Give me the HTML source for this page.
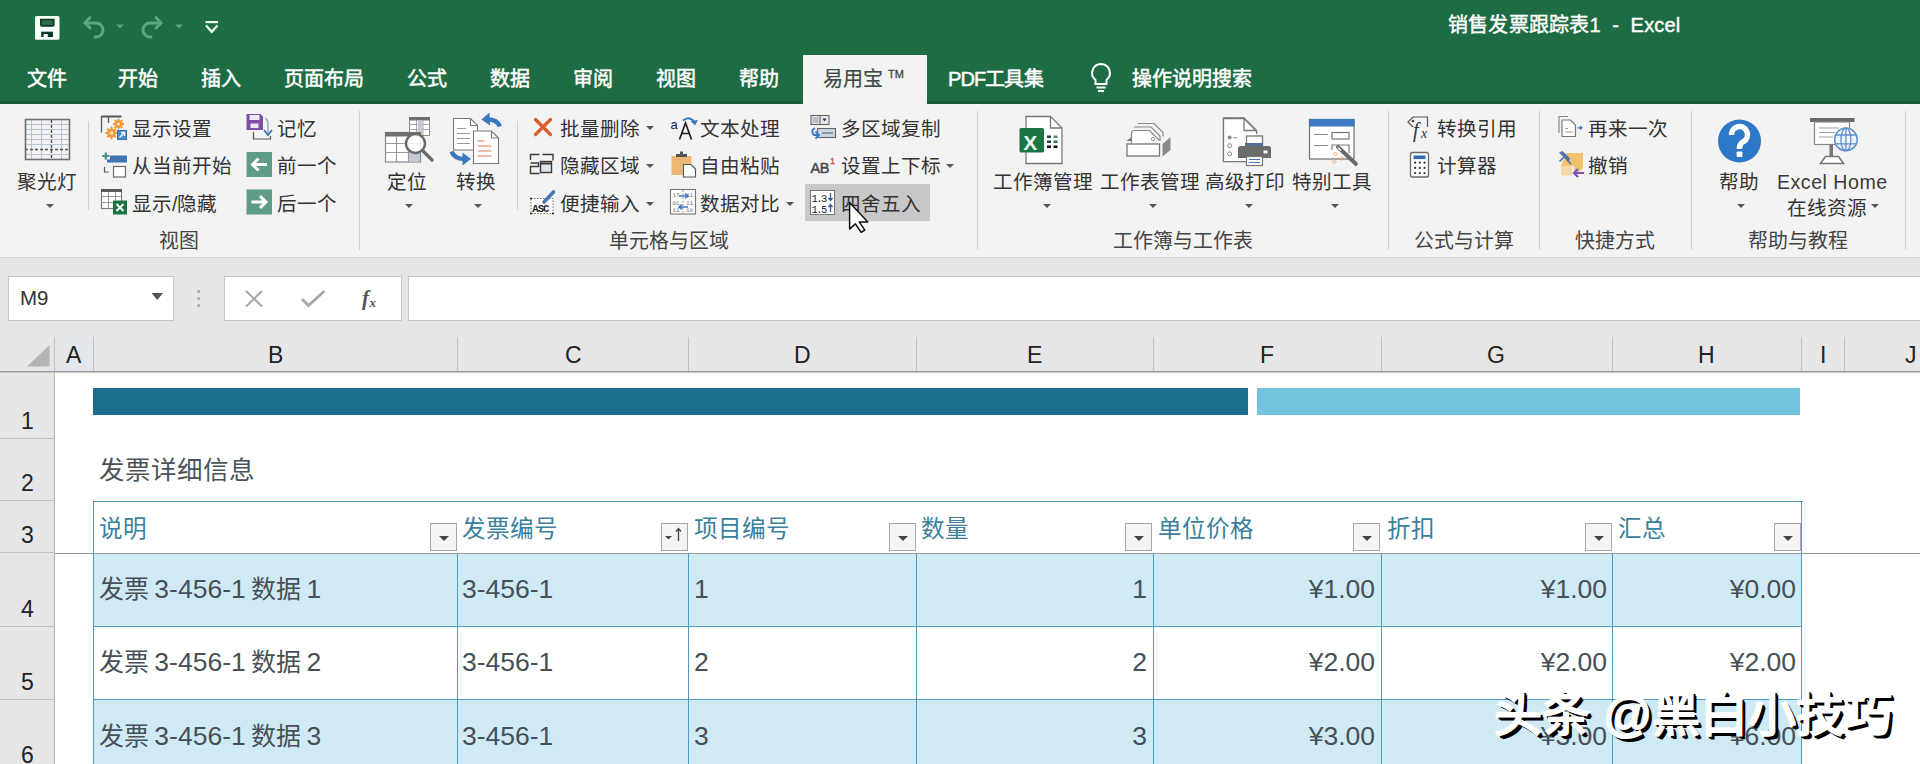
<!DOCTYPE html>
<html lang="zh-CN"><head><meta charset="utf-8">
<style>
*{margin:0;padding:0;box-sizing:border-box}
html,body{width:1920px;height:764px;overflow:hidden;background:#fff;font-family:"Liberation Sans",sans-serif}
.a{position:absolute;white-space:nowrap}
svg{position:absolute;overflow:visible}
.tab{position:absolute;top:66px;font-size:20px;color:#fff;line-height:26px;-webkit-text-stroke:0.5px currentColor}
.rt{position:absolute;font-size:19.6px;color:#333;line-height:24px;white-space:nowrap}
.gl{position:absolute;top:229px;font-size:19.9px;color:#444;line-height:24px;white-space:nowrap}
.sep{position:absolute;width:1px;background:#d0d0d0}
.dd{position:absolute;width:0;height:0;border-left:4px solid transparent;border-right:4px solid transparent;border-top:4px solid #555}
.colh{position:absolute;top:337px;height:35px;font-size:23px;color:#222;line-height:36px}
.colsep{position:absolute;top:337px;height:35px;width:1px;background:#c0c0c0}
.rowh{position:absolute;left:0;width:55px;font-size:23px;color:#222;text-align:center}
.rsep{position:absolute;left:0;width:55px;height:1px;background:#c0c0c0}
.th{position:absolute;top:514px;font-size:23.6px;color:#3b7f9c;line-height:30px}
.td{position:absolute;font-size:26.5px;color:#465056;line-height:30px}
.cj{font-size:25px}
.ws{word-spacing:-2px}
.fb{position:absolute;top:523px;width:27px;height:28px;background:#f4f4f4;border:1px solid #a8a8a8}
.fb:after{content:"";position:absolute;left:8px;top:12px;border-left:5px solid transparent;border-right:5px solid transparent;border-top:5px solid #444}
</style></head>
<body>
<div class="a" style="left:0;top:0;width:1920px;height:104px;background:#1e6c44"></div>
<div class="a" style="left:0;top:101px;width:1920px;height:3px;background:#185e39"></div>
<!-- QAT -->
<svg style="left:0;top:0" width="240" height="50">
 <rect x="35" y="16" width="24.5" height="23.8" rx="1.5" fill="#f4fff8"/>
 <path d="M40 18.7 h14.6 v6 a2 2 0 0 1 -2 2 h-10.6 a2 2 0 0 1 -2 -2z" fill="#0f3a22"/>
 <rect x="41.8" y="20.3" width="11" height="4.6" fill="#2a6e48"/>
 <rect x="41.2" y="31.7" width="11.8" height="5.3" fill="#0f3a22"/>
 <rect x="43.6" y="34" width="4.2" height="3" fill="#f4fff8"/>
 <g stroke="#5ea582" stroke-width="3" fill="none" stroke-linecap="round">
  <path d="M86 23 h10 a7 7 0 0 1 0 14 h-1"/>
  <path d="M90 17.5 l-5 5.5 l5 5"/>
  <path d="M160 23 h-10 a7 7 0 0 0 0 14 h1"/>
  <path d="M156 17.5 l5 5.5 l-5 5"/>
 </g>
 <path d="M116 24.5 h8 l-4 4z M175 24.5 h8 l-4 4z" fill="#5ea582"/>
 <rect x="205.5" y="21" width="12.5" height="2.2" fill="#e8fff0"/>
 <path d="M206 25.5 l5.75 6.3 l5.75 -6.3" stroke="#e8fff0" stroke-width="2.4" fill="none"/>
</svg>
<div class="a" style="left:1448px;top:12px;font-size:20px;color:#fff;line-height:26px;-webkit-text-stroke:0.4px #fff;letter-spacing:0.2px">销售发票跟踪表1&nbsp;&nbsp;-&nbsp;&nbsp;Excel</div>
<!-- tabs -->
<div class="tab" style="left:27px">文件</div>
<div class="tab" style="left:118px">开始</div>
<div class="tab" style="left:201px">插入</div>
<div class="tab" style="left:284px">页面布局</div>
<div class="tab" style="left:407px">公式</div>
<div class="tab" style="left:490px">数据</div>
<div class="tab" style="left:573px">审阅</div>
<div class="tab" style="left:656px">视图</div>
<div class="tab" style="left:739px">帮助</div>
<div class="a" style="left:803px;top:55px;width:124px;height:52px;background:#f3f3f3"></div>
<div class="tab" style="left:823px;color:#3d4a44;-webkit-text-stroke:0.2px #3d4a44">易用宝</div>
<div class="a" style="left:888px;top:68px;font-size:11px;color:#3d4a44;-webkit-text-stroke:0.3px #3d4a44">TM</div>
<div class="tab" style="left:948px;letter-spacing:-0.9px">PDF工具集</div>
<svg style="left:1088px;top:62px" width="26" height="32">
 <path d="M13 2 a9 9 0 0 1 5.5 16 v4 h-11 v-4 a9 9 0 0 1 5.5 -16z" stroke="#fff" stroke-width="2" fill="none"/>
 <path d="M8.5 25.5 h9 M10 29 h6" stroke="#fff" stroke-width="2"/>
</svg>
<div class="tab" style="left:1132px">操作说明搜索</div>

<div class="a" style="left:0;top:104px;width:1920px;height:154px;background:#f3f3f3"></div>
<div class="a" style="left:0;top:257px;width:1920px;height:1px;background:#d6d6d6"></div>
<!-- separators -->
<div class="sep" style="left:88px;top:121px;height:89px"></div>
<div class="sep" style="left:359px;top:111px;height:139px"></div>
<div class="sep" style="left:517px;top:121px;height:89px"></div>
<div class="sep" style="left:977px;top:111px;height:139px"></div>
<div class="sep" style="left:1388px;top:111px;height:139px"></div>
<div class="sep" style="left:1539px;top:111px;height:139px"></div>
<div class="sep" style="left:1691px;top:111px;height:139px"></div>
<div class="sep" style="left:1905px;top:111px;height:139px"></div>
<!-- group labels -->
<div class="gl" style="left:159px">视图</div>
<div class="gl" style="left:609px">单元格与区域</div>
<div class="gl" style="left:1113px">工作簿与工作表</div>
<div class="gl" style="left:1414px">公式与计算</div>
<div class="gl" style="left:1575px">快捷方式</div>
<div class="gl" style="left:1748px">帮助与教程</div>
<!-- big labels -->
<div class="rt" style="left:17px;top:170px">聚光灯</div>
<div class="dd" style="left:46px;top:204px"></div>
<div class="rt" style="left:387px;top:170px">定位</div>
<div class="dd" style="left:405px;top:204px"></div>
<div class="rt" style="left:456px;top:170px">转换</div>
<div class="dd" style="left:474px;top:204px"></div>
<div class="rt" style="left:993px;top:170px">工作簿管理</div>
<div class="dd" style="left:1043px;top:204px"></div>
<div class="rt" style="left:1100px;top:170px">工作表管理</div>
<div class="dd" style="left:1149px;top:204px"></div>
<div class="rt" style="left:1205px;top:170px">高级打印</div>
<div class="dd" style="left:1245px;top:204px"></div>
<div class="rt" style="left:1292px;top:170px">特别工具</div>
<div class="dd" style="left:1331px;top:204px"></div>
<div class="rt" style="left:1719px;top:170px">帮助</div>
<div class="dd" style="left:1737px;top:204px"></div>
<div class="rt" style="left:1777px;top:170px;letter-spacing:0.5px;color:#3a3a3a">Excel Home</div>
<div class="rt" style="left:1787px;top:196px">在线资源</div>
<div class="dd" style="left:1871px;top:204px"></div>
<!-- small labels -->
<div class="rt" style="left:132px;top:117px">显示设置</div>
<div class="rt" style="left:132px;top:154px">从当前开始</div>
<div class="rt" style="left:132px;top:192px">显示/隐藏</div>
<div class="rt" style="left:277px;top:117px">记忆</div>
<div class="rt" style="left:277px;top:154px">前一个</div>
<div class="rt" style="left:277px;top:192px">后一个</div>
<div class="rt" style="left:560px;top:117px">批量删除</div>
<div class="dd" style="left:646px;top:126px"></div>
<div class="rt" style="left:560px;top:154px">隐藏区域</div>
<div class="dd" style="left:646px;top:164px"></div>
<div class="rt" style="left:560px;top:192px">便捷输入</div>
<div class="dd" style="left:646px;top:202px"></div>
<div class="rt" style="left:700px;top:117px">文本处理</div>
<div class="rt" style="left:700px;top:154px">自由粘贴</div>
<div class="rt" style="left:700px;top:192px">数据对比</div>
<div class="dd" style="left:786px;top:202px"></div>
<div class="a" style="left:805px;top:184px;width:125px;height:37px;background:#c8c8c8"></div>
<div class="rt" style="left:841px;top:117px">多区域复制</div>
<div class="rt" style="left:841px;top:154px">设置上下标</div>
<div class="dd" style="left:946px;top:164px"></div>
<div class="rt" style="left:841px;top:192px">四舍五入</div>
<div class="rt" style="left:1437px;top:117px">转换引用</div>
<div class="rt" style="left:1437px;top:154px">计算器</div>
<div class="rt" style="left:1588px;top:117px">再来一次</div>
<div class="rt" style="left:1588px;top:154px">撤销</div>

<!-- spotlight grid -->
<svg style="left:0;top:0" width="300" height="260">
 <g stroke="#b7c3d3" stroke-width="1" fill="none">
  <path d="M31.5 120 v39 M41.5 120 v39 M61.5 120 v39"/>
  <path d="M25 124.5 h45 M25 129.5 h45 M25 134.5 h45 M25 139.5 h45 M25 144.5 h45 M25 154.5 h45"/>
 </g>
 <rect x="25.5" y="119.5" width="44" height="40" fill="none" stroke="#6e6e6e" stroke-width="1.6"/>
 <path d="M51.5 120 v39 M25 149.5 h45" stroke="#555" stroke-width="1.4" stroke-dasharray="3 2"/>
 <!-- 显示设置 -->
 <path d="M101.5 115.5 h20 v2 h-20z" fill="#595959"/>
 <path d="M101.5 116 v16.5 M108.5 117 v6" stroke="#595959" stroke-width="1.3" fill="none"/>
 <g fill="#f29a38">
  <circle cx="118.5" cy="124" r="4"/>
  <path d="M118.5 118.5 v11 M113 124 h11 M114.6 120.1 l7.8 7.8 M122.4 120.1 l-7.8 7.8" stroke="#f29a38" stroke-width="1.8"/>
  <circle cx="111.5" cy="133" r="4.6"/>
  <path d="M111.5 126.8 v12.4 M105.3 133 h12.4 M107.1 128.6 l8.8 8.8 M115.9 128.6 l-8.8 8.8" stroke="#f29a38" stroke-width="2"/>
 </g>
 <circle cx="118.5" cy="124" r="1.5" fill="#fbe3c6"/>
 <circle cx="111.5" cy="133" r="1.8" fill="#fbe3c6"/>
 <rect x="117.5" y="130.5" width="9" height="9" fill="#4b8bd0" stroke="#3b70b0" stroke-width="1"/>
 <path d="M119.5 137.5 l5 -5 M121 132.5 h3.5 v3.5" stroke="#fff" stroke-width="1.4" fill="none"/>
 <!-- 从当前开始 -->
 <path d="M105.8 152.5 v7 M102.3 156 h7" stroke="#4e8e80" stroke-width="2.2"/>
 <path d="M110 155.5 h17 v7 h-20 v-3 h3z" fill="#3d75b5"/>
 <path d="M104.5 167 v5 h4" stroke="#595959" stroke-width="1.2" fill="none"/>
 <rect x="113.5" y="166.5" width="12" height="10.5" fill="#fff" stroke="#6a6a6a" stroke-width="1.2"/>
 <!-- 显示/隐藏 -->
 <rect x="101.5" y="189.5" width="20" height="19" fill="#fff" stroke="#7a7a7a" stroke-width="1.1"/>
 <rect x="101" y="189" width="21" height="3" fill="#595959"/>
 <path d="M101.5 196.5 h20 M101.5 202.5 h12 M108.5 192 v16 M115.5 192 v8" stroke="#9a9a9a" stroke-width="1" fill="none"/>
 <rect x="113" y="200.5" width="14" height="14" fill="#1e7145"/>
 <path d="M116.5 204 l7 7 M123.5 204 l-7 7" stroke="#e8f5ea" stroke-width="2.2"/>
 <!-- 记忆 -->
 <path d="M246.5 114 h14 l2.5 2.5 v13.5 h-16.5z" fill="#7b4fa5"/>
 <rect x="249.5" y="115" width="10" height="5" fill="#f0e8f6"/>
 <rect x="250.5" y="123.5" width="8" height="4.5" fill="#f0e8f6"/>
 <path d="M253.5 132 v7 h17 v-3" stroke="#555" stroke-width="1.2" fill="none"/>
 <path d="M265.5 118 q3 3 2.5 7 v9" stroke="#8a9ab0" stroke-width="1.2" fill="none"/>
 <path d="M264 130 l4 5 l4 -5" stroke="#3c75b8" stroke-width="1.8" fill="none"/>
 <!-- 前一个 / 后一个 -->
 <rect x="246.5" y="152" width="25.5" height="25" fill="#5e9c88"/>
 <path d="M267 164.5 h-14 M258.5 158.5 l-6 6 l6 6" stroke="#fff" stroke-width="3" fill="none" stroke-linejoin="miter"/>
 <rect x="246.5" y="189.5" width="25.5" height="25" fill="#5e9c88"/>
 <path d="M251.5 202 h14 M260 196 l6 6 l-6 6" stroke="#fff" stroke-width="3" fill="none"/>
</svg>

<svg style="left:0;top:0" width="1000" height="260">
 <!-- 定位 -->
 <rect x="409.5" y="117.5" width="20" height="18" fill="#fff" stroke="#8a8a8a" stroke-width="1"/>
 <rect x="409" y="117" width="21" height="3.5" fill="#6f6f6f"/>
 <path d="M409.5 124.5 h20 M409.5 129.5 h20 M416.5 120 v15 M423 120 v15" stroke="#a8a8a8" stroke-width="1" fill="none"/>
 <rect x="418" y="120.5" width="4.5" height="14" fill="#c3cad6"/>
 <rect x="385.5" y="132.5" width="35" height="29.5" fill="#fff" stroke="#8a8a8a" stroke-width="1.2"/>
 <rect x="385" y="132" width="36" height="4.5" fill="#6f6f6f"/>
 <path d="M385.5 143.5 h35 M385.5 152.5 h35 M396.5 136 v26 M408.5 136 v26" stroke="#9a9a9a" stroke-width="1.2" fill="none"/>
 <rect x="409" y="153" width="11" height="8.5" fill="#c3cad6"/>
 <circle cx="415.5" cy="143.5" r="9.5" fill="#fff" fill-opacity="0.85" stroke="#6a6a6a" stroke-width="2.4"/>
 <path d="M422.5 150.5 l9.5 9.5" stroke="#6a6a6a" stroke-width="3.2" stroke-linecap="round"/>
 <!-- 转换 -->
 <path d="M453.5 118.5 h17 l7 7 v24.5 h-24z" fill="#fff" stroke="#7a7a7a" stroke-width="1.1"/>
 <path d="M470.5 118.5 v7 h7" fill="none" stroke="#7a7a7a" stroke-width="1.1"/>
 <path d="M457 128.5 h9 M457 133.5 h13 M457 138.5 h13 M457 143.5 h13" stroke="#9a9a9a" stroke-width="1.1"/>
 <path d="M473.5 131 h18 l7 7 v25.5 h-25z" fill="#fff" stroke="#7a7a7a" stroke-width="1.1"/>
 <path d="M491.5 131 v7 h7" fill="none" stroke="#7a7a7a" stroke-width="1.1"/>
 <path d="M477.5 141 h7 M477.5 146 h14 M477.5 151 h14 M477.5 156 h14" stroke="#e07a50" stroke-width="1.1"/>
 <path d="M478.5 147 h0" stroke="#7a7a7a"/>
 <path d="M500 126.5 q-3 -7 -12 -7" stroke="#3c78c0" stroke-width="4.4" fill="none"/>
 <path d="M489.5 112.5 l-8 7 l8.5 6z" fill="#3c78c0"/>
 <path d="M451.5 151.5 q3 7.5 12.5 7.5" stroke="#3c78c0" stroke-width="4.4" fill="none"/>
 <path d="M462.5 152.5 l8.5 6.5 l-8.5 6.5z" fill="#3c78c0"/>
 <!-- 批量删除 X -->
 <path d="M535.5 119.5 l15 15 M550.5 119.5 l-15 15" stroke="#d9602e" stroke-width="3.2" stroke-linecap="round"/>
 <!-- 隐藏区域 -->
 <path d="M530.5 160 v-5.5 h9 M530.5 163 h8 v3.5 h-8 v7 h9" stroke="#3a3a3a" stroke-width="1.4" fill="none"/>
 <rect x="540.5" y="161.5" width="11" height="11" fill="#dbe6f2" stroke="#3a3a3a" stroke-width="1.4"/>
 <path d="M542.5 154.5 h10.5 v6" stroke="#3a3a3a" stroke-width="1.4" fill="none"/>
 <path d="M540.5 163.5 h11" stroke="#3a3a3a" stroke-width="2"/>
 <!-- 便捷输入 -->
 <rect x="531" y="198.5" width="22" height="15" fill="#fff" stroke="#666" stroke-width="0.9" stroke-dasharray="1.5 1.5"/>
 <text x="532.3" y="211.5" font-family="Liberation Mono" font-size="10.5" fill="#222" style="letter-spacing:-0.9px;font-weight:bold">ASC</text>
 <path d="M544 202 l9.5 -10" stroke="#4a7ab8" stroke-width="3.6" stroke-linecap="round"/>
 <circle cx="531" cy="198.5" r="1" fill="#222"/><circle cx="553" cy="213.5" r="1" fill="#222"/><circle cx="531" cy="213.5" r="1" fill="#222"/>
 <!-- 文本处理 -->
 <text x="670.5" y="128.5" font-family="Liberation Sans" font-size="13" fill="#222">a</text>
 <path d="M679.5 139.5 l6 -16.5 l6 16.5 M681.8 133.5 h7.5" stroke="#222" stroke-width="1.7" fill="none"/>
 <path d="M683 120.5 q6 -5 11 1" stroke="#3c78c0" stroke-width="1.8" fill="none"/>
 <path d="M690.5 121 l4.5 4.5 l3 -5.5z" fill="#3c78c0"/>
 <!-- 自由粘贴 -->
 <rect x="671.5" y="156" width="20" height="19" fill="#eab874"/>
 <rect x="676" y="154" width="11" height="3" fill="#555"/>
 <rect x="680" y="151.5" width="3" height="3" fill="#555"/>
 <path d="M683.5 164.5 h7.5 l4.5 4.5 v8 h-12z" fill="#fff" stroke="#555" stroke-width="1.1"/>
 <!-- 数据对比 -->
 <rect x="670.5" y="189.5" width="25" height="24.5" fill="#fff" stroke="#777" stroke-width="1.1"/>
 <path d="M683 190 v24" stroke="#999" stroke-width="1" stroke-dasharray="2 1.5"/>
 <g fill="#777" font-family="Liberation Mono" font-size="6"><text x="672.5" y="197">17</text><text x="686" y="197">11</text><text x="672.5" y="204.5">01</text><text x="686" y="204.5">11</text><text x="672.5" y="212">11</text><text x="686" y="212">18</text></g>
 <path d="M679 196 h9 M685 193.5 l3 2.5 l-3 2.5 M688 207 h-9 M682 204.5 l-3 2.5 l3 2.5" stroke="#3c78c0" stroke-width="1.6" fill="none"/>
 <!-- 多区域复制 -->
 <rect x="811" y="115.5" width="18" height="9" fill="#e6e6ee" stroke="#666" stroke-width="1.1"/>
 <path d="M820 115.5 v9" stroke="#666" stroke-width="1.1"/>
 <rect x="812.5" y="117" width="6" height="6" fill="#b8bcd0"/>
 <path d="M822.5 118.5 h4 l-2 3z" fill="#333"/>
 <rect x="817.5" y="128.5" width="18" height="9" fill="#c9d6e3" stroke="#666" stroke-width="1.1"/>
 <path d="M822 133 h11" stroke="#555" stroke-width="1"/>
 <path d="M815 128 q-5 3 -1 7 h3" stroke="#3c78c0" stroke-width="2" fill="none"/>
 <path d="M815.5 131.5 l3.5 3.5 l-3.5 3.5" stroke="#3c78c0" stroke-width="1.8" fill="none"/>
 <!-- 设置上下标 -->
 <text x="810.5" y="172.5" font-family="Liberation Sans" font-size="14.5" fill="#4a4a4a" stroke="#4a4a4a" stroke-width="0.5" style="letter-spacing:-0.3px">AB</text>
 <text x="830" y="164" font-family="Liberation Sans" font-size="9" fill="#c8552a" stroke="#c8552a" stroke-width="0.3">1</text>
 <!-- 四舍五入 -->
 <rect x="810.5" y="190.5" width="24" height="24" fill="#fff" stroke="#777" stroke-width="1"/>
 <g font-family="Liberation Mono" font-size="10.5" fill="#222" style="letter-spacing:-1.6px"><text x="811.5" y="201.5">1.3</text><text x="811.5" y="212.5">1.5</text></g>
 <path d="M830.5 193 v7 M828.5 198 l2 2.5 l2 -2.5 M830.5 212 v-7 M828.5 207 l2 -2.5 l2 2.5" stroke="#2f5e9a" stroke-width="1.3" fill="none"/>
</svg>

<svg style="left:0;top:0" width="1920" height="260">
 <!-- 工作簿管理 -->
 <path d="M1026 116.5 h24.5 l11.5 11.5 v35.5 h-36z" fill="#fff" stroke="#7a7a7a" stroke-width="1.3"/>
 <path d="M1050.5 116.5 v11.5 h11.5" fill="none" stroke="#7a7a7a" stroke-width="1.3"/>
 <rect x="1019.5" y="128" width="24.5" height="24.5" rx="1.5" fill="#1c7445"/>
 <text x="1023.2" y="149.5" font-family="Liberation Sans" font-size="21" fill="#e6faee" style="font-weight:bold">X</text>
 <g fill="#1f4a33"><rect x="1047" y="135.5" width="4" height="2.5"/><rect x="1053.5" y="135.5" width="4" height="2.5" fill="#4f9a78"/><rect x="1047" y="140.5" width="4" height="2.5"/><rect x="1053.5" y="140.5" width="4" height="2.5" fill="#2f7a58"/><rect x="1047" y="145.5" width="4" height="2.5" fill="#111"/><rect x="1053.5" y="145.5" width="4" height="2.5" fill="#111"/></g>
 <!-- 工作表管理 -->
 <path d="M1138 123.5 h16 l9 9 v4" fill="none" stroke="#8a8a8a" stroke-width="1.2"/>
 <path d="M1134 127 h17 l9 9 v5" fill="none" stroke="#8a8a8a" stroke-width="1.2"/>
 <path d="M1131.5 143.5 v-10 a3 3 0 0 1 3 -3 h15 l10 10" fill="#fff" stroke="#8a8a8a" stroke-width="1.2"/>
 <path d="M1126.5 141 l5 -4 v4z" fill="#777"/>
 <circle cx="1153" cy="139" r="1.6" fill="none" stroke="#999" stroke-width="1"/>
 <rect x="1127" y="144" width="32.5" height="12" fill="#fff" stroke="#777" stroke-width="1.3"/>
 <path d="M1162.5 144 l8 -7 v13 l-8 6.5z" fill="#8a8a8a"/>
 <!-- 高级打印 -->
 <path d="M1223.5 118 h20.5 l12.5 12.5 v3 M1247 161.5 h-23.5 v-43.5" fill="#fff" stroke="#777" stroke-width="1.3"/>
 <path d="M1223.5 118.5 h20.5 l12 12 v30.5 h-32.5z" fill="#fff"/>
 <path d="M1223.5 162 v-43.5 h20.5 l12.5 12.5 v3" fill="none" stroke="#777" stroke-width="1.3"/>
 <path d="M1244 118.5 v12 h12" fill="none" stroke="#777" stroke-width="1.3"/>
 <circle cx="1229.6" cy="137.6" r="2" fill="#888"/>
 <circle cx="1229.6" cy="145.7" r="2" fill="none" stroke="#888" stroke-width="1"/>
 <circle cx="1229.6" cy="153.9" r="2" fill="none" stroke="#888" stroke-width="1"/>
 <path d="M1233 137.6 h4" stroke="#999" stroke-width="1"/>
 <rect x="1246.5" y="136" width="16" height="10.5" fill="#fff" stroke="#777" stroke-width="1.3"/>
 <path d="M1245 143 h18 v3 h-18z" fill="#4f6f95"/>
 <path d="M1240.5 146 h28 a2.5 2.5 0 0 1 2.5 2.5 v9.5 h-33 v-9.5 a2.5 2.5 0 0 1 2.5 -2.5z" fill="#6b6b6b"/>
 <rect x="1263.5" y="150.5" width="4" height="3" fill="#fff"/>
 <rect x="1246.5" y="156.5" width="16" height="9" fill="#fff" stroke="#777" stroke-width="1.2"/>
 <path d="M1249 159.5 h11 M1249 162.5 h11" stroke="#3c78c0" stroke-width="1.2"/>
 <!-- 特别工具 -->
 <rect x="1309.5" y="119.5" width="44.5" height="39.5" fill="#fff" stroke="#777" stroke-width="1.3"/>
 <rect x="1309" y="119" width="45.5" height="7.5" fill="#3d78c2"/>
 <path d="M1314 134.5 h14 M1314 145.5 h14" stroke="#888" stroke-width="1.2"/>
 <rect x="1332" y="132.5" width="17" height="6.5" fill="#fff" stroke="#777" stroke-width="1.2"/>
 <path d="M1332 150 v-5 h17 v8" fill="none" stroke="#777" stroke-width="1.2"/>
 <path d="M1338 147 l18 17" stroke="#6a6a6a" stroke-width="3.8" stroke-linecap="round"/>
 <path d="M1338 147.5 l3 3" stroke="#fff" stroke-width="1.2"/>
 <g fill="none" stroke="#f2a46a" stroke-width="1"><path d="M1335.5 152 l2 2 l-2 2 l-2 -2z"/><path d="M1334 159.5 l2 2 l-2 2 l-2 -2z"/><path d="M1342 156.5 l2 2 l-2 2 l-2 -2z"/></g>
 <!-- 转换引用 -->
 <path d="M1413 117 h14.5 v10 M1413 117 l-5 5 l5 5" fill="none" stroke="#555" stroke-width="1.2"/>
 <circle cx="1413" cy="121" r="1.2" fill="#333"/>
 <text x="1413" y="136.5" font-family="Liberation Serif" font-style="italic" font-size="20" fill="#333">f</text>
 <text x="1421" y="138" font-family="Liberation Serif" font-style="italic" font-size="14" fill="#333">x</text>
 <!-- 计算器 -->
 <rect x="1410.5" y="152.5" width="18" height="24.5" rx="2" fill="#fff" stroke="#6a6a6a" stroke-width="1.3"/>
 <rect x="1413.5" y="155.5" width="12" height="3.6" fill="#2e6db4"/>
 <g fill="#333"><circle cx="1415.1" cy="162.7" r="1.1"/><circle cx="1419.8" cy="162.7" r="1.1"/><circle cx="1424.5" cy="162.7" r="1.1"/><circle cx="1415.1" cy="167.9" r="1.1"/><circle cx="1419.8" cy="167.9" r="1.1"/><circle cx="1424.5" cy="167.9" r="1.1"/><circle cx="1415.1" cy="173.1" r="1.1"/><circle cx="1419.8" cy="173.1" r="1.1"/><circle cx="1424.5" cy="173.1" r="1.1"/></g>
 <!-- 再来一次 -->
 <path d="M1559 133 v-16.5 h9" fill="none" stroke="#888" stroke-width="1.2"/>
 <path d="M1562 120 h8.5 l5 5 v11.5 h-13.5z" fill="#fff" stroke="#777" stroke-width="1.2"/>
 <path d="M1565 128.5 h3 M1565 132 h8" stroke="#999" stroke-width="1"/>
 <path d="M1577.5 127.8 h4 M1580 126 l2 1.8 l-2 1.8" stroke="#3c78c0" stroke-width="1.2" fill="none"/>
 <!-- 撤销 -->
 <path d="M1566 153 h17 v15 l-5 5 h-4 v-7 h-13z" fill="#f0c36c"/>
 <path d="M1561 166 h11 v9.5 h-11z" fill="#f3d9a6"/>
 <path d="M1559 152.5 l3.5 -1.5 l7.5 7.5 l-1.5 3.5z" fill="#4a72b0"/>
 <path d="M1564 157 l-4.5 4.5" stroke="#4a72b0" stroke-width="1.6"/>
 <path d="M1566.5 159.5 l4.5 4.5" stroke="#4a72b0" stroke-width="1.4"/>
 <path d="M1584 173 h-10 M1578 169 l-4 4 l4 4" stroke="#7a4fb0" stroke-width="2.2" fill="none"/>
 <!-- 帮助 -->
 <circle cx="1739.5" cy="141" r="21.5" fill="#2e78c8"/>
 <path d="M1731.5 135 a8 8 0 1 1 12 6.5 q-4 2.5 -4 6 v1.5" fill="none" stroke="#fff" stroke-width="5.6"/>
 <rect x="1736.6" y="151.5" width="5.8" height="5.6" rx="1" fill="#fff"/>
 <!-- Excel Home -->
 <rect x="1810" y="118" width="44.5" height="4" fill="#6a6a6a"/>
 <rect x="1814.5" y="122" width="35" height="22.5" fill="#fff" stroke="#8a8a8a" stroke-width="1.2"/>
 <path d="M1819 128 h20 M1819 132.5 h16 M1819 137 h14" stroke="#a0a0a0" stroke-width="1.1"/>
 <rect x="1829.5" y="144.5" width="3.5" height="13" fill="#777"/>
 <path d="M1820.5 163.5 l5 -7 h13 l5 7z" fill="#fff" stroke="#777" stroke-width="1.6"/>
 <circle cx="1845.9" cy="139.4" r="11.3" fill="#eef3fa" stroke="#5f8fcf" stroke-width="1.5"/>
 <ellipse cx="1845.9" cy="139.4" rx="5" ry="11.3" fill="none" stroke="#5f8fcf" stroke-width="1.3"/>
 <path d="M1845.9 128 v22.7 M1835 135 h21.8 M1835 143.8 h21.8" stroke="#5f8fcf" stroke-width="1.3"/>
</svg>

<div class="a" style="left:0;top:258px;width:1920px;height:114px;background:#e6e6e6"></div>
<div class="a" style="left:8px;top:276px;width:166px;height:45px;background:#fff;border:1px solid #c6c6c6"></div>
<div class="a" style="left:20px;top:285px;font-size:20.5px;color:#333;line-height:26px">M9</div>
<svg style="left:0;top:0" width="420" height="330">
 <path d="M151.5 293 h11.5 l-5.75 7z" fill="#555"/>
 <g fill="#a6a6a6"><circle cx="198.7" cy="291.5" r="1.5"/><circle cx="198.7" cy="298.5" r="1.5"/><circle cx="198.7" cy="305.5" r="1.5"/></g>
</svg>
<div class="a" style="left:224px;top:276px;width:178px;height:45px;background:#fff;border:1px solid #c6c6c6"></div>
<svg style="left:0;top:0" width="420" height="330">
 <path d="M246 291 l16 15.5 M262 291 l-16 15.5" stroke="#a8a8a8" stroke-width="2"/>
 <path d="M302 299 l6.5 6.5 l16 -14.5" stroke="#a8a8a8" stroke-width="2.8" fill="none"/>
 <text x="362" y="305" font-family="Liberation Serif" font-style="italic" font-size="21" fill="#555" style="font-weight:bold">f</text>
 <text x="369.5" y="307" font-family="Liberation Serif" font-style="italic" font-size="13" fill="#555" style="font-weight:bold">x</text>
</svg>
<div class="a" style="left:408px;top:276px;width:1520px;height:45px;background:#fff;border:1px solid #c6c6c6"></div>
<!-- column header -->
<svg style="left:0;top:0" width="60" height="372">
 <path d="M49.5 345 v21.5 h-22.5z" fill="#b4b4b4"/>
</svg>
<div class="a" style="left:55px;top:337px;width:38px;height:34px;background:#e3e6ea"></div>
<div class="colsep" style="left:54px"></div>
<div class="colsep" style="left:93px"></div>
<div class="colsep" style="left:457px"></div>
<div class="colsep" style="left:688px"></div>
<div class="colsep" style="left:916px"></div>
<div class="colsep" style="left:1153px"></div>
<div class="colsep" style="left:1381px"></div>
<div class="colsep" style="left:1612px"></div>
<div class="colsep" style="left:1801px"></div>
<div class="colsep" style="left:1844px"></div>
<div class="colh" style="left:66px">A</div>
<div class="colh" style="left:268px">B</div>
<div class="colh" style="left:565px">C</div>
<div class="colh" style="left:794px">D</div>
<div class="colh" style="left:1027px">E</div>
<div class="colh" style="left:1260px">F</div>
<div class="colh" style="left:1487px">G</div>
<div class="colh" style="left:1698px">H</div>
<div class="colh" style="left:1820px">I</div>
<div class="colh" style="left:1905px">J</div>
<div class="a" style="left:0;top:371px;width:1920px;height:1px;background:#9a9a9a"></div><div class="a" style="left:0;top:372px;width:1920px;height:1px;background:#c8c8c8"></div>

<!-- row headers -->
<div class="a" style="left:0;top:373px;width:54px;height:391px;background:#e6e6e6"></div>
<div class="a" style="left:54px;top:373px;width:1px;height:391px;background:#b4b4b4"></div>
<div class="rsep" style="top:438px"></div>
<div class="rsep" style="top:500px"></div>
<div class="rsep" style="top:552px"></div>
<div class="rsep" style="top:626px"></div>
<div class="rsep" style="top:699px"></div>
<div class="rowh" style="top:405px;margin-top:1px;line-height:30px">1</div>
<div class="rowh" style="top:467px;margin-top:1px;line-height:30px">2</div>
<div class="rowh" style="top:519px;margin-top:1px;line-height:30px">3</div>
<div class="rowh" style="top:593px;margin-top:1px;line-height:30px">4</div>
<div class="rowh" style="top:666px;margin-top:1px;line-height:30px">5</div>
<div class="rowh" style="top:739px;margin-top:1px;line-height:30px">6</div>
<!-- bars -->
<div class="a" style="left:93px;top:388px;width:1155px;height:27px;background:#1c6e8f"></div>
<div class="a" style="left:1257px;top:388px;width:543px;height:27px;background:#72c3e0"></div>
<div class="a" style="left:99px;top:455px;font-size:25.5px;color:#4a5358;line-height:30px">发票详细信息</div>
<!-- freeze line -->
<div class="a" style="left:55px;top:553px;width:1865px;height:1px;background:#9a9a9a"></div>
<!-- table -->
<div class="a" style="left:93px;top:501px;width:1710px;height:1px;background:#4d9dc2"></div>
<div class="a" style="left:93px;top:501px;width:1px;height:263px;background:#4d9dc2"></div>
<div class="a" style="left:1801px;top:501px;width:1px;height:263px;background:#4d9dc2"></div>
<div class="a" style="left:94px;top:554px;width:1707px;height:72px;background:#d0eaf5"></div>
<div class="a" style="left:94px;top:700px;width:1707px;height:64px;background:#d0eaf5"></div>
<div class="a" style="left:93px;top:626px;width:1709px;height:1px;background:#4d9dc2"></div>
<div class="a" style="left:93px;top:699px;width:1709px;height:1px;background:#4d9dc2"></div>
<div class="a" style="left:457px;top:553px;width:1px;height:211px;background:#4d9dc2"></div>
<div class="a" style="left:688px;top:553px;width:1px;height:211px;background:#4d9dc2"></div>
<div class="a" style="left:916px;top:553px;width:1px;height:211px;background:#4d9dc2"></div>
<div class="a" style="left:1153px;top:553px;width:1px;height:211px;background:#4d9dc2"></div>
<div class="a" style="left:1381px;top:553px;width:1px;height:211px;background:#4d9dc2"></div>
<div class="a" style="left:1612px;top:553px;width:1px;height:211px;background:#4d9dc2"></div>
<!-- header -->
<div class="th" style="left:99px">说明</div>
<div class="th" style="left:462px">发票编号</div>
<div class="th" style="left:694px">项目编号</div>
<div class="th" style="left:921px">数量</div>
<div class="th" style="left:1158px">单位价格</div>
<div class="th" style="left:1387px">折扣</div>
<div class="th" style="left:1618px">汇总</div>
<div class="fb" style="left:429px;margin-left:1px"></div>
<div class="a" style="left:661px;top:523px;width:27px;height:28px;background:#f4f4f4;border:1px solid #a8a8a8"></div>
<svg style="left:0;top:0" width="700" height="560"><path d="M665 536 h7 l-3.5 3.5z" fill="#444"/><path d="M678.5 541 v-12 M676 531.5 l2.5 -3 l2.5 3" stroke="#444" stroke-width="1.3" fill="none"/></svg>
<div class="fb" style="left:888px;margin-left:1px"></div>
<div class="fb" style="left:1124px;margin-left:1px"></div>
<div class="fb" style="left:1352px;margin-left:1px"></div>
<div class="fb" style="left:1584px;margin-left:1px"></div>
<div class="fb" style="left:1773px;margin-left:1px"></div>
<!-- data -->
<div class="td ws" style="left:99px;top:574px"><span class="cj">发票</span> 3-456-1 <span class="cj">数据</span> 1</div>
<div class="td ws" style="left:99px;top:647px"><span class="cj">发票</span> 3-456-1 <span class="cj">数据</span> 2</div>
<div class="td ws" style="left:99px;top:721px"><span class="cj">发票</span> 3-456-1 <span class="cj">数据</span> 3</div>
<div class="td" style="left:462px;top:574px">3-456-1</div>
<div class="td" style="left:462px;top:647px">3-456-1</div>
<div class="td" style="left:462px;top:721px">3-456-1</div>
<div class="td" style="left:694px;top:574px">1</div>
<div class="td" style="left:694px;top:647px">2</div>
<div class="td" style="left:694px;top:721px">3</div>
<div class="td" style="right:773px;top:574px">1</div>
<div class="td" style="right:773px;top:647px">2</div>
<div class="td" style="right:773px;top:721px">3</div>
<div class="td" style="right:545px;top:574px">¥1.00</div>
<div class="td" style="right:545px;top:647px">¥2.00</div>
<div class="td" style="right:545px;top:721px">¥3.00</div>
<div class="td" style="right:313px;top:574px">¥1.00</div>
<div class="td" style="right:313px;top:647px">¥2.00</div>
<div class="td" style="right:313px;top:721px">¥3.00</div>
<div class="td" style="right:124px;top:574px">¥0.00</div>
<div class="td" style="right:124px;top:647px">¥2.00</div>
<div class="td" style="right:124px;top:721px">¥6.00</div>

<svg style="left:0;top:0" width="900" height="240">
 <path d="M849.6 202.6 v26.5 l5.8 -5.2 l5.8 8.4 l3.6 -2.2 l-5.6 -8.2 h8.6z" fill="#fff" stroke="#111" stroke-width="1.5" stroke-linejoin="round"/>
</svg>
<div class="a" style="left:1494px;top:685px;font-size:48px;line-height:60px;color:#fff;-webkit-text-stroke:2.2px #fff;text-shadow:3px 3px 0 #000,2px 3px 0 #000,3px 2px 0 #000,4px 3.5px 0 #000,2px 2px 0 #000">头条 @黑白小技巧</div>

</body></html>
